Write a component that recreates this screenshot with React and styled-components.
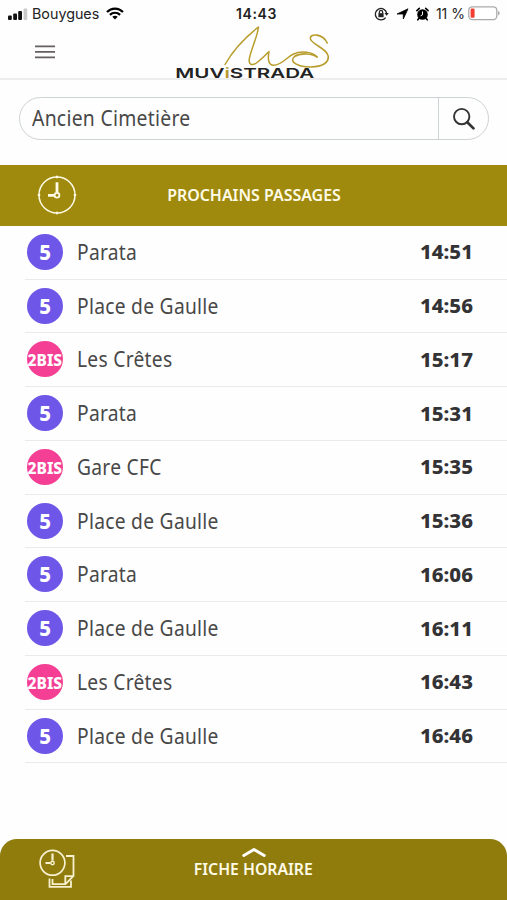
import styled, { createGlobalStyle } from 'styled-components';

const departures = [
    { line: '5', stop: 'Parata', time: '14:51' },
    { line: '5', stop: 'Place de Gaulle', time: '14:56' },
    { line: '2BIS', stop: 'Les Crêtes', time: '15:17' },
    { line: '5', stop: 'Parata', time: '15:31' },
    { line: '2BIS', stop: 'Gare CFC', time: '15:35' },
    { line: '5', stop: 'Place de Gaulle', time: '15:36' },
    { line: '5', stop: 'Parata', time: '16:06' },
    { line: '5', stop: 'Place de Gaulle', time: '16:11' },
    { line: '2BIS', stop: 'Les Crêtes', time: '16:43' },
    { line: '5', stop: 'Place de Gaulle', time: '16:46' },
];

const SignalIcon = () => (
    <svg width="20" height="12" viewBox="0 0 20 12" fill="#111">
        <rect x="0" y="7.5" width="3.8" height="4.5" rx="1" />
        <rect x="5.2" y="5.5" width="3.8" height="6.5" rx="1" />
        <rect x="10.2" y="3" width="3.8" height="9" rx="1" />
        <rect x="15.6" y="0.5" width="3.6" height="11.5" rx="1" fill="#c9c9c9" />
    </svg>
);

const WifiIcon = () => (
    <svg width="18" height="13" viewBox="0 0 18 13" fill="none" stroke="#000" strokeWidth="2.2">
        <path d="M1 5C5.5 .4 12.500 .4 17 5" />
        <path d="M3.900 7.900C6.800 5 11.200 5 14.100 7.900" />
        <path d="M6.300 9.800C7.800 8.400 10.200 8.400 11.700 9.800L9 12.500Z" fill="#000" stroke="none" />
    </svg>
);

const LockIcon = () => (
    <svg width="15" height="14" viewBox="0 0 15 14" fill="none" stroke="#222" strokeWidth="1.3">
        <path d="M11.600 10.600A5.700 5.700 0 1 1 12.600 6" />
        <path d="M10.500 6H14.800L12.600 8.800Z" fill="#222" stroke="none" />
        <rect x="4.400" y="6.200" width="5.200" height="4" fill="#222" stroke="none" />
        <path d="M5.400 6.500V5A1.600 1.600 0 0 1 8.600 5V6.500" />
    </svg>
);

const ArrowIcon = () => (
    <svg width="13" height="12" viewBox="0 0 13 12" fill="#000" stroke="#000" strokeWidth="0.8" strokeLinejoin="round">
        <path d="M12 .8L7.300 11V6H1Z" />
    </svg>
);

const AlarmIcon = () => (
    <svg width="13" height="14" viewBox="0 0 13 14">
        <circle cx="6.500" cy="7.500" r="5.300" fill="#000" />
        <path d="M.9 3.600L3.300 1.300M12.100 3.600L9.700 1.300M2.800 11.500L1.800 12.800M10.200 11.500L11.200 12.800" stroke="#000" strokeWidth="1.600" strokeLinecap="round" />
        <path d="M6.500 4.500V7.800L4.600 8.800" fill="none" stroke="#fff" strokeWidth="1" />
    </svg>
);

const BatteryIcon = () => (
    <svg width="33" height="15" viewBox="0 0 33 15">
        <rect x=".8" y=".8" width="28" height="12.800" rx="3.500" fill="#fff" stroke="#aaa" strokeWidth="1.300" />
        <rect x="2.600" y="2.600" width="4" height="9.200" rx="1.200" fill="#f23c32" />
        <path d="M30.200 5C32 5.500 32 8.900 30.200 9.400Z" fill="#999" />
    </svg>
);

const MenuIcon = () => (
    <svg width="20" height="14" viewBox="0 0 20 14" stroke="#655f61" strokeWidth="1.800">
        <path d="M0 1.300H20M0 6.900H20M0 12.400H20" />
    </svg>
);

const Logo = () => (
    <LogoSvg viewBox="170 24 165 56">
        <path
            d="M225 64.500C231 54 243 39 258.500 27C257.500 37 249.500 53 249.200 60C249 65 252.500 66 257 62.500C262 59 266 54.500 269 51.500C268 57 267.500 64.500 273 65.300C281 66 287 57 293 54.200C301 50.500 313 52 317 57"
            strokeWidth="1.500"
        />
        <path
            d="M317 57C313 54 301 52 294.500 56.500C288 62 299 67.200 311 67C322 66.800 329 63 328.200 56C327 48 311 44.500 310.300 38.500C310 33 323 33.500 327.200 43"
            strokeWidth="1.600"
        />
        <text x="175.300" y="78.300" textLength="139" lengthAdjust="spacingAndGlyphs">
            MUV<tspan fill="#b3992b">i</tspan>STRADA
        </text>
    </LogoSvg>
);

const ClockIcon = () => (
    <svg width="40" height="40" viewBox="0 0 40 40" fill="none" stroke="#fffbe6">
        <circle cx="20" cy="20" r="18" strokeWidth="1.500" />
        <path d="M20 .8V3.200M20 36.800V39.200M.8 20H3.200M36.800 20H39.200" strokeWidth="2" />
        <path d="M20 7.200V17.500M11 20.300H17.500" strokeWidth="2.800" />
        <circle cx="20" cy="20.300" r="2.400" strokeWidth="1.800" />
    </svg>
);

const TimetableIcon = () => (
    <svg width="38" height="40" viewBox="0 0 38 40" fill="none" stroke="#f7f1d0">
        <circle cx="13.500" cy="13.800" r="12.400" strokeWidth="1.700" />
        <path d="M13.500 4.500V11.500M6.500 14H11.500" strokeWidth="2.200" />
        <circle cx="13.500" cy="14" r="1.700" strokeWidth="1.400" />
        <path d="M27 7H34.500V27L26.500 35.200H13.500V30" strokeWidth="1.800" />
        <path d="M10.500 29.500V37.800H32V31.500" strokeWidth="1.800" />
        <path d="M26.300 35V27.200H34" strokeWidth="1.800" />
    </svg>
);

const App = () => {
    return (
        <>
            <GlobalStyle />
            <Screen>
                <StatusBar>
                    <StatusLeft>
                        <SignalIcon />
                        <Carrier>Bouygues</Carrier>
                        <WifiIcon />
                    </StatusLeft>
                    <Clock>14:43</Clock>
                    <StatusRight>
                        <LockIcon />
                        <ArrowIcon />
                        <AlarmIcon />
                        <Percent>11 %</Percent>
                        <BatteryIcon />
                    </StatusRight>
                </StatusBar>

                <Header>
                    <MenuButton aria-label="Menu"><MenuIcon /></MenuButton>
                    <Logo />
                </Header>

                <SearchBox>
                    <SearchField><Stretch $x={0.9}>Ancien Cimetière</Stretch></SearchField>
                    <SearchButton aria-label="Rechercher">
                        <svg width="24" height="24" viewBox="0 0 24 24" fill="none" stroke="#333">
                            <circle cx="9.700" cy="9.600" r="7.700" strokeWidth="1.900" />
                            <path d="M15.300 15.200L21.500 21.400" strokeWidth="2.700" strokeLinecap="round" />
                        </svg>
                    </SearchButton>
                </SearchBox>

                <Banner>
                    <ClockIcon />
                    <BannerTitle><Stretch $x={0.965} $origin="center">PROCHAINS PASSAGES</Stretch></BannerTitle>
                </Banner>

                <List>
                    {departures.map(({ line, stop, time }) => (
                        <Row key={time}>
                            <Badge $long={line.length > 1}>
                                <Stretch $x={0.97} $origin="center">{line}</Stretch>
                            </Badge>
                            <Stop><Stretch $x={0.895}>{stop}</Stretch></Stop>
                            <Time><Stretch $x={1.02} $origin="right">{time}</Stretch></Time>
                        </Row>
                    ))}
                </List>

                <Footer>
                    <TimetableIcon />
                    <FooterTitle>
                        <svg width="26" height="11" viewBox="0 0 26 11" fill="none" stroke="#fff" strokeWidth="3" strokeLinecap="round" strokeLinejoin="round">
                            <path d="M2.800 8.500L13 2.500L23.200 8.500" />
                        </svg>
                        <Stretch $x={0.955} $origin="center">FICHE HORAIRE</Stretch>
                    </FooterTitle>
                </Footer>
            </Screen>
        </>
    );
};


const GlobalStyle = createGlobalStyle`
    * {
        box-sizing: border-box;
    }
    body {
        margin: 0;
        background: #fefefe;
    }
    svg {
        display: block;
        flex-shrink: 0;
    }
`

const Screen = styled.div`
    display: flex;
    flex-direction: column;
    width: 507px;
    height: 900px;
    overflow: hidden;
    background: #fefefe;
    color: #484848;
    font-family: 'Noto Sans', sans-serif;
`

/* scales the glyph widths of a label */
const Stretch = styled.span`
    display: inline-block;
    white-space: nowrap;
    transform: scaleX(${({ $x }) => $x});
    transform-origin: ${({ $origin }) => $origin || 'left'} center;
`

const StatusBar = styled.div`
    display: grid;
    grid-template-columns: 1fr auto 1fr;
    align-items: center;
    flex-shrink: 0;
    height: 27px;
    padding: 0 6px 0 8px;
    color: #222;
    font-family: Inter, sans-serif;
    font-size: 13.5px;
`

const StatusLeft = styled.div`
    display: flex;
    align-items: center;
    gap: 6px;
`

const Carrier = styled.span`
    width: 68px;
    margin-left: -2px;
    font-size: 14.3px;
    white-space: nowrap;
`

const Clock = styled.span`
    margin-left: 4px;
    font-size: 14px;
    font-weight: 600;
    letter-spacing: 0.6px;
`

const StatusRight = styled.div`
    display: flex;
    justify-content: flex-end;
    align-items: center;
    gap: 7px;
`

const Percent = styled.span`
    margin-right: -4px;
    font-size: 14px;
    white-space: nowrap;
`

const Header = styled.header`
    display: grid;
    grid-template-columns: 170px 165px;
    flex-shrink: 0;
    height: 53px;
    border-bottom: 2px solid #ededed;
`

const MenuButton = styled.button`
    align-self: start;
    width: 20px;
    margin: 18px 0 0 35px;
    padding: 0;
    border: 0;
    background: none;
`

const LogoSvg = styled.svg`
    width: 165px;
    height: 56px;
    margin-top: -3px;
    fill: none;
    stroke: #b89d2c;
    stroke-linejoin: round;
    stroke-linecap: round;
    text {
        fill: #222;
        stroke: none;
        font: 600 13.5px Inter, sans-serif;
    }
`

const SearchBox = styled.div`
    display: flex;
    flex-shrink: 0;
    width: 470px;
    height: 43px;
    margin: 17px 0 0 19px;
    border: 1.500px solid #cdd2d4;
    border-radius: 22px;
    font-size: 21.5px;
    letter-spacing: 0.3px;
`

const SearchField = styled.div`
    flex: 1;
    padding-left: 12px;
    line-height: 40px;
`

const SearchButton = styled.button`
    display: flex;
    align-items: center;
    width: 50px;
    padding: 0 0 0 13px;
    border: 0;
    border-left: 1px solid #cdd2d4;
    background: none;
`

const Banner = styled.div`
    display: grid;
    grid-template-columns: 40px 1fr 77px;
    align-items: center;
    flex-shrink: 0;
    height: 61px;
    margin-top: 24.5px;
    padding: 0 0 1px 37px;
    background: #9f8a0e;
    color: #fffbe6;
`

const BannerTitle = styled.h1`
    margin: 0;
    font-size: 16.5px;
    font-weight: 600;
    line-height: 22px;
    text-align: center;
`

const List = styled.ul`
    margin: 0;
    padding: 0.4px 0 0 25px;
    list-style: none;
`

const Row = styled.li`
    display: flex;
    align-items: center;
    height: 53.75px;
    padding: 0 34px 1px 2px;
    border-bottom: 1px solid #eaeaea;
`

const Badge = styled.span`
    display: flex;
    justify-content: center;
    align-items: center;
    flex-shrink: 0;
    width: 36px;
    height: 36px;
    border-radius: 50%;
    background: ${({ $long }) => ($long ? '#f43f94' : '#6d56e8')};
    color: #fff;
    font-size: ${({ $long }) => ($long ? '16px' : '21px')};
    font-weight: 800;
    padding-top: ${({ $long }) => ($long ? '2px' : '0')};
`

const Stop = styled.span`
    flex: 1;
    margin: -1px 0 0 14px;
    font-size: 21.5px;
    letter-spacing: 0.3px;
`

const Time = styled.span`
    color: #333336;
    font-size: 20px;
    font-weight: 800;
`

const Footer = styled.footer`
    display: grid;
    grid-template-columns: 38px 1fr 77px;
    flex-shrink: 0;
    height: 61px;
    margin-top: auto;
    padding: 10px 0 0 39px;
    border-radius: 17px 17px 0 0;
    background: #907b0d;
    color: #fffbe6;
`

const FooterTitle = styled.div`
    display: flex;
    flex-direction: column;
    align-items: center;
    margin-top: -2px;
    font-size: 16.5px;
    font-weight: 600;
    line-height: 22px;
`
export default App;
